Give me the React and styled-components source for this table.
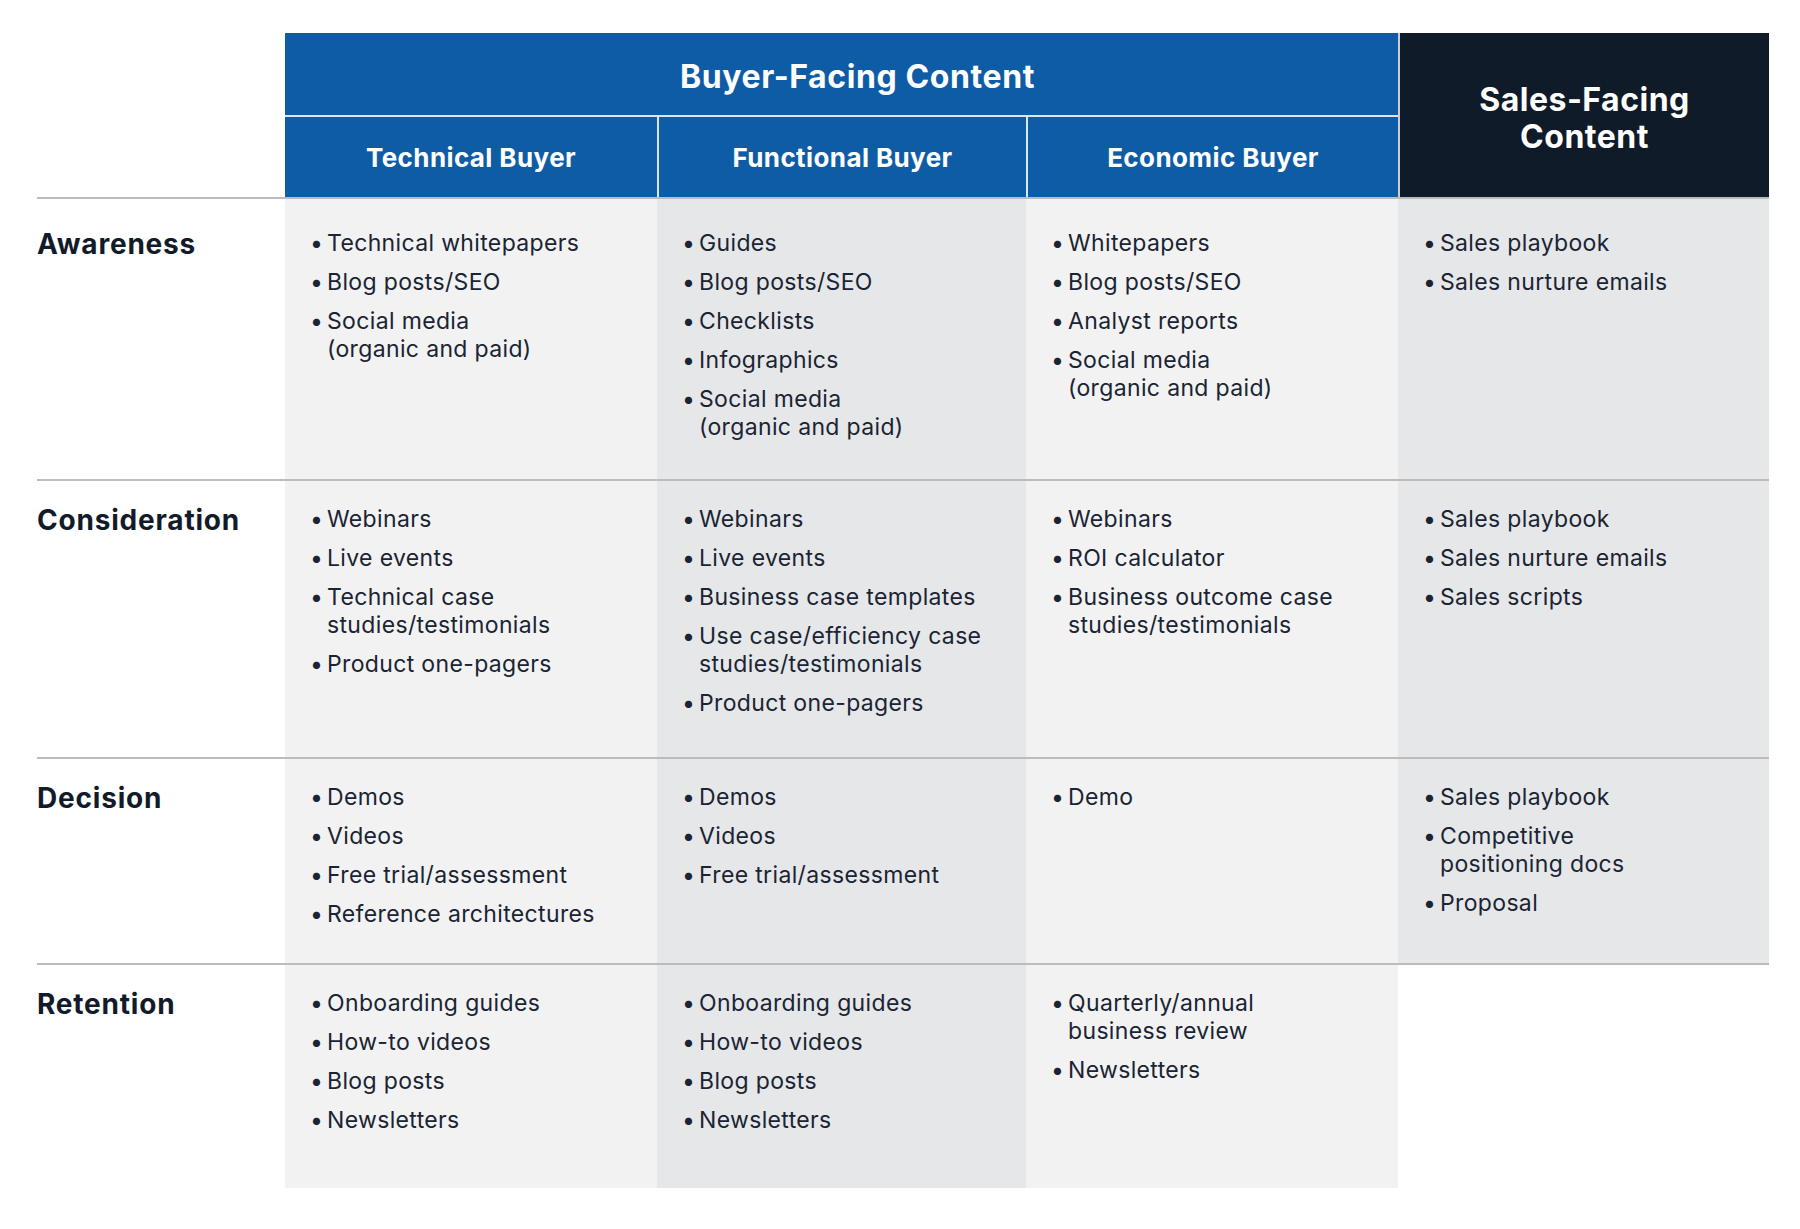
import React from "react";
import styled, { createGlobalStyle } from "styled-components";

const GlobalStyle = createGlobalStyle`
  html, body {
    margin: 0;
    padding: 0;
    background: #fff;
  }
  body {
    font-family: Inter, "Open Sans", sans-serif;
    color: #111b2a;
  }
`;

const buyers = ["Technical Buyer", "Functional Buyer", "Economic Buyer"];

// each item is a list of forced lines
const stages = [
  {
    name: "Awareness",
    top: 32,
    cells: [
      [["Technical whitepapers"], ["Blog posts/SEO"], ["Social media", "(organic and paid)"]],
      [["Guides"], ["Blog posts/SEO"], ["Checklists"], ["Infographics"], ["Social media", "(organic and paid)"]],
      [["Whitepapers"], ["Blog posts/SEO"], ["Analyst reports"], ["Social media", "(organic and paid)"]],
      [["Sales playbook"], ["Sales nurture emails"]],
    ],
  },
  {
    name: "Consideration",
    top: 26,
    cells: [
      [["Webinars"], ["Live events"], ["Technical case", "studies/testimonials"], ["Product one-pagers"]],
      [["Webinars"], ["Live events"], ["Business case templates"], ["Use case/efficiency case", "studies/testimonials"], ["Product one-pagers"]],
      [["Webinars"], ["ROI calculator"], ["Business outcome case", "studies/testimonials"]],
      [["Sales playbook"], ["Sales nurture emails"], ["Sales scripts"]],
    ],
  },
  {
    name: "Decision",
    top: 26,
    cells: [
      [["Demos"], ["Videos"], ["Free trial/assessment"], ["Reference architectures"]],
      [["Demos"], ["Videos"], ["Free trial/assessment"]],
      [["Demo"]],
      [["Sales playbook"], ["Competitive", "positioning docs"], ["Proposal"]],
    ],
  },
  {
    name: "Retention",
    top: 26,
    cells: [
      [["Onboarding guides"], ["How-to videos"], ["Blog posts"], ["Newsletters"]],
      [["Onboarding guides"], ["How-to videos"], ["Blog posts"], ["Newsletters"]],
      [["Quarterly/annual", "business review"], ["Newsletters"]],
      null,
    ],
  },
];

const shades = ["#f2f2f2", "#e6e7e9", "#f2f2f2", "#e6e7e9"];

export default function App() {
  return (
    <>
      <GlobalStyle />
      <Page>
        <Table>
          <Corner />
          <BuyerHeader>Buyer-Facing Content</BuyerHeader>
          <SalesHeader>
            Sales-Facing
            <br />
            Content
          </SalesHeader>
          {buyers.map((b, i) => (
            <SubHeader key={b} $first={i === 0}>
              {b}
            </SubHeader>
          ))}
          {stages.map((stage) => (
            <React.Fragment key={stage.name}>
              <StageLabel $top={stage.top}>{stage.name}</StageLabel>
              {stage.cells.map((items, ci) => (
                <Cell key={ci} $bg={items ? shades[ci] : "#fff"} $top={stage.top}>
                  {items && (
                    <List>
                      {items.map((lines, li) => (
                        <Item key={li}>
                          {lines.map((line, k) => (
                            <React.Fragment key={k}>
                              {k > 0 && <br />}
                              {line}
                            </React.Fragment>
                          ))}
                        </Item>
                      ))}
                    </List>
                  )}
                </Cell>
              ))}
            </React.Fragment>
          ))}
        </Table>
      </Page>
    </>
  );
}

const Page = styled.div`
  width: 1800px;
  height: 1229px;
  padding: 33px 0 0 37px;
  box-sizing: border-box;
`;

const Table = styled.div`
  display: grid;
  grid-template-columns: 248px 372px 369px 372px 371px;
  grid-template-rows: 84px 80px 282px 278px 206px 225px;
`;

const Corner = styled.div`
  grid-row: 1 / 3;
  grid-column: 1;
`;

const BuyerHeader = styled.div`
  grid-row: 1;
  grid-column: 2 / 5;
  display: flex;
  align-items: center;
  justify-content: center;
  padding: 5px 0 0 32px;
  background: #0f5ca6;
  border-bottom: 2px solid #dbe6f2;
  color: #fff;
  font-weight: 700;
  font-size: 32px;
  letter-spacing: 0.6px;
`;

const SalesHeader = styled.div`
  grid-row: 1 / 3;
  grid-column: 5;
  display: flex;
  align-items: center;
  justify-content: center;
  text-align: center;
  padding-top: 6px;
  background: #101b29;
  border-left: 2px solid #c9ced6;
  color: #fff;
  font-weight: 700;
  font-size: 32px;
  line-height: 37px;
  letter-spacing: 0.5px;
`;

const SubHeader = styled.div`
  grid-row: 2;
  display: flex;
  align-items: center;
  justify-content: center;
  background: #0f5ca6;
  border-left: ${(p) => (p.$first ? "none" : "2px solid #dbe6f2")};
  color: #fff;
  font-weight: 700;
  font-size: 26px;
  letter-spacing: 0.4px;
`;

const StageLabel = styled.div`
  grid-column: 1;
  border-top: 2px solid #bcbcbc;
  padding-top: ${(p) => p.$top - 2}px;
  font-weight: 700;
  font-size: 28px;
  line-height: 30px;
  letter-spacing: 0.8px;
  color: #111b2a;
`;

const Cell = styled.div`
  background: ${(p) => p.$bg};
  border-top: 2px solid #bcbcbc;
  padding: ${(p) => p.$top - 1}px 8px 0 25px;
`;

const List = styled.ul`
  list-style: none;
  margin: 0;
  padding: 0;
`;

const Item = styled.li`
  padding-left: 17px;
  text-indent: -17px;
  font-size: 23px;
  line-height: 27.5px;
  margin-bottom: 11.5px;
  letter-spacing: 0.35px;
  white-space: nowrap;
  color: #1a2433;

  &::before {
    content: "•";
    display: inline-block;
    width: 17px;
    text-indent: 0;
    letter-spacing: 0;
  }
`;
